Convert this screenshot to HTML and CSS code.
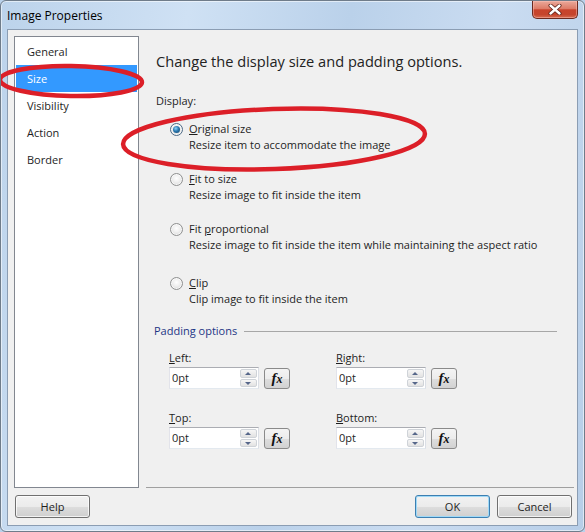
FILE: index.html
```html
<!DOCTYPE html>
<html lang="en">
<head>
  <meta charset="UTF-8">
  <title>Image Properties</title>
  <link rel="stylesheet" href="styles.css">
</head>
<body>
  <div class="window">
    <div class="titlebar">
      <span class="title">Image Properties</span>
      <button class="close" title="Close">
        <svg width="14" height="11" viewBox="0 0 14 11">
          <path d="M2.5 1.5 L11.5 9.5 M11.5 1.5 L2.5 9.5" stroke="#5a1d14" stroke-width="4" stroke-linecap="round"/>
          <path d="M2.5 1.5 L11.5 9.5 M11.5 1.5 L2.5 9.5" stroke="#fff" stroke-width="2.4" stroke-linecap="round"/>
        </svg>
      </button>
    </div>

    <div class="client">
      <div class="main">
        <ul class="nav">
          <li>General</li>
          <li class="active">Size</li>
          <li>Visibility</li>
          <li>Action</li>
          <li>Border</li>
        </ul>

        <div class="pane">
          <h1>Change the display size and padding options.</h1>

          <div class="group-label">Display:</div>
          <div class="options">
            <div class="option">
              <span class="radio checked"></span>
              <div>
                <div class="opt-name"><u>O</u>riginal size</div>
                <div>Resize item to accommodate the image</div>
              </div>
            </div>
            <div class="option">
              <span class="radio"></span>
              <div>
                <div class="opt-name"><u>F</u>it to size</div>
                <div>Resize image to fit inside the item</div>
              </div>
            </div>
            <div class="option">
              <span class="radio"></span>
              <div>
                <div class="opt-name">Fit <u>p</u>roportional</div>
                <div>Resize image to fit inside the item while maintaining the aspect ratio</div>
              </div>
            </div>
            <div class="option last">
              <span class="radio"></span>
              <div>
                <div class="opt-name"><u>C</u>lip</div>
                <div>Clip image to fit inside the item</div>
              </div>
            </div>
          </div>

          <div class="section">Padding options</div>
          <div class="fields">
            <div class="field">
              <div class="field-label"><u>L</u>eft:</div>
              <div class="field-row">
                <div class="spin-box">0pt<span class="spinner"><span class="up"></span><span class="down"></span></span></div>
                <button class="fx"><i>f</i><i>x</i></button>
              </div>
            </div>
            <div class="field">
              <div class="field-label"><u>R</u>ight:</div>
              <div class="field-row">
                <div class="spin-box">0pt<span class="spinner"><span class="up"></span><span class="down"></span></span></div>
                <button class="fx"><i>f</i><i>x</i></button>
              </div>
            </div>
            <div class="field">
              <div class="field-label"><u>T</u>op:</div>
              <div class="field-row">
                <div class="spin-box">0pt<span class="spinner"><span class="up"></span><span class="down"></span></span></div>
                <button class="fx"><i>f</i><i>x</i></button>
              </div>
            </div>
            <div class="field">
              <div class="field-label"><u>B</u>ottom:</div>
              <div class="field-row">
                <div class="spin-box">0pt<span class="spinner"><span class="up"></span><span class="down"></span></span></div>
                <button class="fx"><i>f</i><i>x</i></button>
              </div>
            </div>
          </div>
        </div>
      </div>

      <div class="footer">
        <button class="btn">Help</button>
        <span class="spacer"></span>
        <button class="btn default">OK</button>
        <button class="btn">Cancel</button>
      </div>
    </div>

    <!-- red pen marks drawn over the dialog -->
    <svg class="marks" width="585" height="532" viewBox="0 0 585 532">
      <ellipse cx="71" cy="81" rx="71" ry="15" transform="rotate(1 71 81)"/>
      <ellipse cx="274" cy="139" rx="151" ry="30" transform="rotate(-2 274 139)"/>
    </svg>
  </div>
</body>
</html>
```

FILE: styles.css
```css
* {
  box-sizing: border-box;
}

body {
  margin: 0;
  background: #b9d1ea;
  font-family: "Open Sans", "Segoe UI", sans-serif;
  font-size: 11px;
  color: #1e1e1e;
}

.window {
  position: relative;
  width: 585px;
  height: 532px;
  display: flex;
  flex-direction: column;
  border: 1px solid #6f7c8a;
  border-radius: 6px;
  overflow: hidden;
  background: linear-gradient(100deg, #bcd3eb 0%, #cfe1f4 28%, #bad1ea 52%, #cadcf1 74%, #b7cee8 100%);
  box-shadow: inset 0 0 0 1px rgba(255, 255, 255, 0.55);
}

.titlebar {
  height: 28px;
  display: flex;
  align-items: center;
  padding-left: 6px;
}

.title {
  font-size: 12px;
  color: #000;
}

.close {
  margin-left: auto;
  margin-right: 6px;
  align-self: flex-start;
  width: 46px;
  height: 18px;
  padding: 0;
  border: 1px solid #6b2a20;
  border-top: none;
  border-radius: 0 0 5px 5px;
  background: linear-gradient(#eaa99a 0%, #dd7c68 45%, #c8432c 52%, #c5452d 80%, #d66d52 100%);
  box-shadow: inset 0 0 0 1px rgba(255, 200, 190, 0.45);
  display: flex;
  align-items: center;
  justify-content: center;
}

.client {
  flex: 1;
  margin: 0 6px 5px 6px;
  border: 1px solid #8b9db3;
  background: #f0f0f0;
  display: flex;
  flex-direction: column;
}

.main {
  flex: 1;
  display: flex;
  gap: 7px;
  padding: 6px 3px 0 6px;
}

.nav {
  width: 125px;
  margin: 0;
  padding: 1px;
  list-style: none;
  background: #fff;
  border: 1px solid #828790;
}

.nav li {
  height: 27px;
  line-height: 27px;
  padding-left: 11px;
}

.nav li.active {
  background: #3399ff;
  color: #fff;
}

.pane {
  flex: 1;
  padding: 15px 0 0 10px;
  border-bottom: 1px solid #a0a0a0;
}

.pane h1 {
  margin: 0;
  font-size: 14.6px;
  font-weight: normal;
  line-height: 20px;
  color: #222;
}

.group-label {
  margin-top: 22px;
  line-height: 16px;
}

.options {
  margin: 12px 0 0 14px;
}

.option {
  display: flex;
  gap: 6px;
  line-height: 16px;
}

.option + .option {
  margin-top: 18px;
}

.option.last {
  margin-top: 22px;
}

.radio {
  flex: none;
  width: 13px;
  height: 13px;
  margin-top: 2px;
  border-radius: 50%;
  border: 1px solid #8f9090;
  background: radial-gradient(circle at 50% 40%, #ffffff 0%, #eeeeee 45%, #cdcdcd 100%);
  box-shadow: inset 0 0 0 1px rgba(255, 255, 255, 0.7);
  position: relative;
}

.radio.checked {
  border-color: #4d6a86;
}

.radio.checked::after {
  content: "";
  position: absolute;
  left: 2px;
  top: 2px;
  width: 7px;
  height: 7px;
  border-radius: 50%;
  background: radial-gradient(circle at 40% 35%, #8fd4fb 0%, #2a79b0 45%, #123f66 100%);
}

.section {
  margin: 16px 17px 0 -2px;
  display: flex;
  align-items: center;
  gap: 7px;
  line-height: 16px;
  color: #1d3585;
}

.section::after {
  content: "";
  flex: 1;
  border-top: 1px solid #a7a7a7;
}

.fields {
  display: grid;
  grid-template-columns: 167px 167px;
  row-gap: 21px;
  margin: 11px 0 0 13px;
}

.field-label {
  line-height: 16px;
}

.field-row {
  display: flex;
  gap: 5px;
  margin-top: 1px;
}

.spin-box {
  width: 90px;
  height: 22px;
  display: flex;
  align-items: center;
  padding: 0 0 2px 2px;
  background: #fff;
  border: 1px solid;
  border-color: #abadb3 #dbdfe6 #e3e9ef #e2e3ea;
}

.spinner {
  margin: 2px 1px 0 auto;
  width: 17px;
  height: 18px;
  display: flex;
  flex-direction: column;
  gap: 1px;
}

.spinner span {
  flex: 1;
  position: relative;
  border: 1px solid #cfd3d8;
  border-radius: 2px;
  background: linear-gradient(#f6f6f6, #e2e2e2);
}

.spinner span::after {
  content: "";
  position: absolute;
  left: 4px;
  top: 2px;
  border-left: 3px solid transparent;
  border-right: 3px solid transparent;
}

.spinner .up::after {
  border-bottom: 3px solid #56678a;
}

.spinner .down::after {
  border-top: 3px solid #56678a;
}

.fx {
  width: 26px;
  height: 21px;
  margin-top: 1px;
  padding: 0;
  border: 1px solid #8a8a8a;
  border-radius: 3px;
  background: linear-gradient(#f4f4f4 0%, #ececec 50%, #dedede 51%, #d2d2d2 100%);
  font-family: "Liberation Serif", serif;
  font-size: 15px;
  font-weight: bold;
  color: #111;
}

.fx i + i {
  font-size: 12px;
}

.footer {
  display: flex;
  gap: 7px;
  padding: 7px 5px 7px 7px;
}

.spacer {
  flex: 1;
}

.btn {
  width: 75px;
  height: 23px;
  padding: 0;
  border: 1px solid #707070;
  border-radius: 3px;
  background: linear-gradient(#f2f2f2 0%, #ebebeb 50%, #dddddd 51%, #cfcfcf 100%);
  box-shadow: inset 0 0 0 1px rgba(255, 255, 255, 0.75);
  font-family: inherit;
  font-size: 11px;
  color: #1e1e1e;
}

.btn.default {
  border-color: #3c7fb1;
  box-shadow: inset 0 0 0 1px #9fd9f7;
}

.marks {
  position: absolute;
  left: -1px;
  top: -1px;
  pointer-events: none;
}

.marks ellipse {
  fill: none;
  stroke: #dc1f28;
  stroke-width: 4.5;
}
```
